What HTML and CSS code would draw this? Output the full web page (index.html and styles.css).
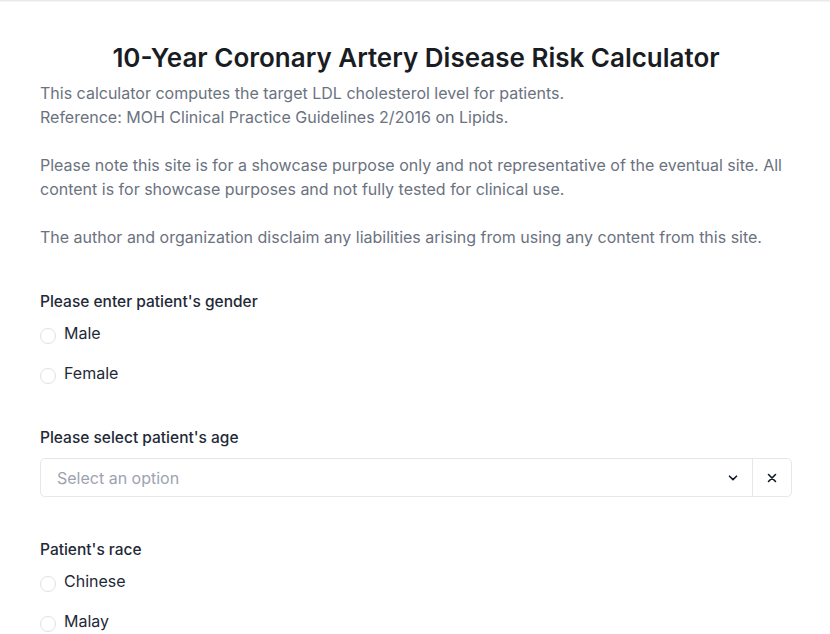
FILE: index.html
```html
<!DOCTYPE html>
<html lang="en">
<head>
<meta charset="utf-8">
<title>10-Year Coronary Artery Disease Risk Calculator</title>
<link rel="stylesheet" href="styles.css">
</head>
<body>
<div class="topbar"></div>
<main class="page">
  <h1 class="title">10-Year Coronary Artery Disease Risk Calculator</h1>
  <p class="intro">This calculator computes the target LDL cholesterol level for patients.<br>Reference: MOH Clinical Practice Guidelines 2/2016 on Lipids.</p>
  <p class="intro">Please note this site is for a showcase purpose only and not representative of the eventual site. All content is for showcase purposes and not fully tested for clinical use.</p>
  <p class="intro">The author and organization disclaim any liabilities arising from using any content from this site.</p>

  <section class="field field-gender">
    <div class="label">Please enter patient's gender</div>
    <label class="radio"><span class="dot"></span><span class="rtext">Male</span></label>
    <label class="radio"><span class="dot"></span><span class="rtext">Female</span></label>
  </section>

  <section class="field field-age">
    <div class="label">Please select patient's age</div>
    <div class="select">
      <div class="sel-main">
        <span class="placeholder">Select an option</span>
        <svg class="chev" width="10" height="6" viewBox="0 0 10 6"><path d="M1.5 1.2 L5 4.6 L8.5 1.2" fill="none" stroke="#111827" stroke-width="1.6" stroke-linecap="round" stroke-linejoin="round"/></svg>
      </div>
      <div class="sel-clear">
        <svg width="10" height="10" viewBox="0 0 10 10"><path d="M1.5 1.5 L8.5 8.5 M8.5 1.5 L1.5 8.5" fill="none" stroke="#111827" stroke-width="1.6" stroke-linecap="round"/></svg>
      </div>
    </div>
  </section>

  <section class="field field-race">
    <div class="label">Patient's race</div>
    <label class="radio"><span class="dot"></span><span class="rtext">Chinese</span></label>
    <label class="radio"><span class="dot"></span><span class="rtext">Malay</span></label>
  </section>
</main>
</body>
</html>
```

FILE: styles.css
```css
html, body {
  margin: 0;
  padding: 0;
  background: #ffffff;
}
body {
  font-family: Inter, "Noto Sans", sans-serif;
  color: #111827;
}
.topbar {
  height: 1px;
  background: #e9e9eb;
  border-bottom: 1px solid #f4f4f5;
}
.page {
  padding: 0 38px 0 40px;
}
.title {
  margin: 39px 0 0;
  font-size: 26px;
  line-height: 34px;
  font-weight: 600;
  text-align: center;
  color: #1a1c23;
  letter-spacing: 0;
}
.intro {
  margin: 0 0 24px;
  font-size: 16px;
  line-height: 24px;
  color: #6b7280;
}
.title + .intro {
  margin-top: 6px;
}
.field-gender {
  margin-top: 41px;
}
.field-age {
  margin-top: 33px;
}
.field-race {
  margin-top: 41px;
}
.label {
  font-size: 15.5px;
  line-height: 24px;
  color: #1f2937;
  font-weight: 450;
  margin-bottom: -1px;
}
.radio {
  display: flex;
  align-items: center;
  height: 40px;
}
.dot {
  box-sizing: border-box;
  width: 16px;
  height: 16px;
  border: 1.5px solid #dfe2e6;
  border-radius: 50%;
  margin-right: 8px;
  position: relative;
  top: 3px;
  flex: none;
}
.rtext {
  font-size: 16px;
  line-height: 24px;
  color: #1f2937;
}
.select {
  box-sizing: border-box;
  display: flex;
  height: 39px;
  border: 1px solid #e5e7eb;
  border-radius: 5px;
  margin-top: 9px;
}
.sel-main {
  flex: 1;
  display: flex;
  align-items: center;
  padding: 0 14px 0 16px;
}
.placeholder {
  flex: 1;
  font-size: 16px;
  color: #9ca3af;
}
.chev {
  display: block;
}
.sel-clear {
  width: 38px;
  border-left: 1px solid #e5e7eb;
  display: flex;
  align-items: center;
  justify-content: center;
}
.sel-clear svg {
  display: block;
}
```
